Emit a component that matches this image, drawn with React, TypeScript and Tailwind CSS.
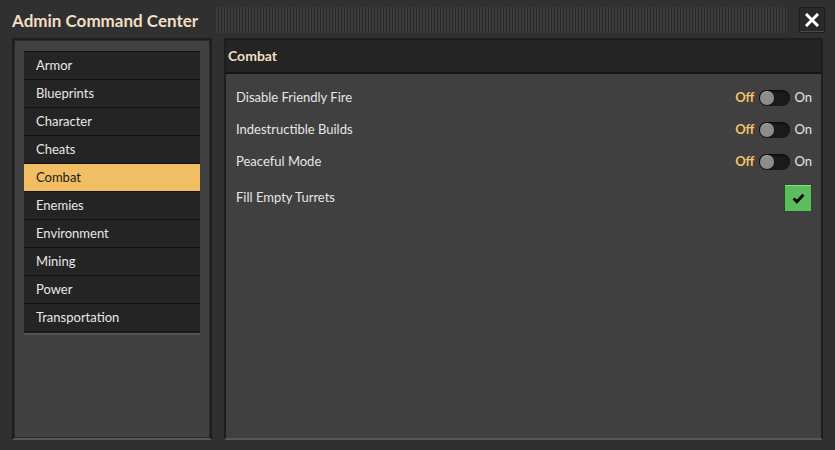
import React from "react";

const items = [
  "Armor",
  "Blueprints",
  "Character",
  "Cheats",
  "Combat",
  "Enemies",
  "Environment",
  "Mining",
  "Power",
  "Transportation",
];

function Toggle() {
  return (
    <div className="flex items-center gap-[4px]">
      <span className="text-[13px] font-bold text-[#f2c46a]">Off</span>
      <div className="relative ml-[1px] h-[16px] w-[31px] rounded-full bg-[#1c1b1c] shadow-[inset_0_1px_2px_rgba(0,0,0,0.8)]">
        <div className="absolute left-[1px] top-[1px] h-[14px] w-[14px] rounded-full bg-[#8c8c8c] shadow-[inset_0_1px_0_rgba(255,255,255,0.25)]" />
      </div>
      <span className="text-[13px] text-[#e6e6e6]">On</span>
    </div>
  );
}

export default function App() {
  return (
    <div
      className="flex h-[450px] w-[835px] flex-col bg-[#313031] text-[#e6e6e6]"
      style={{ fontFamily: "Lato, 'Noto Sans', sans-serif" }}
    >
      {/* title bar */}
      <div className="flex h-[38px] items-center pl-[12px] pr-[10px] pt-[2px]">
        <div className="text-[17px] font-bold leading-none text-[#f1dfc2]">Admin Command Center</div>
        <div className="ml-[18px] h-[26px] flex-1 bg-[repeating-linear-gradient(90deg,#3c3b3c_0px,#3c3b3c_2px,#2b2a2b_2px,#2b2a2b_3px)]" />
        <button className="ml-[12px] flex h-[26px] w-[26px] items-center justify-center border border-[#1e1d1e] bg-[#2a292a] shadow-[inset_0_-1px_0_#4a494a]">
          <svg width="14" height="14" viewBox="0 0 14 14">
            <path d="M2 2 L12 12 M12 2 L2 12" stroke="#ffffff" strokeWidth="3" strokeLinecap="square" />
          </svg>
        </button>
      </div>

      {/* body */}
      <div className="flex flex-1 gap-[12px] pb-[10px] pl-[12px] pr-[12px]">
        {/* left panel */}
        <div className="w-[200px] border-2 border-[#1f1e1f] border-b-[#575657] bg-[#414141] px-[10px] pt-[11px] shadow-[inset_0_0_0_1px_#2a292a]">
          <div className="flex flex-col bg-[#1a191a] pb-[2px] shadow-[0_2px_0_#555455]">
            {items.map((it) => {
              const sel = it === "Combat";
              return (
                <div
                  key={it}
                  className={
                    sel
                      ? "flex h-[28px] items-center border-t border-[#141314] bg-[#f2be64] pl-[12px] text-[13px] text-[#1b1a1b]"
                      : "flex h-[28px] items-center border-t border-[#141314] bg-[#252425] pl-[12px] text-[13px] text-[#e8e8e8]"
                  }
                >
                  {it}
                </div>
              );
            })}
          </div>
        </div>

        {/* right panel */}
        <div className="flex flex-1 flex-col border-2 border-[#1f1e1f] border-b-[#575657] bg-[#404040]">
          <div className="flex h-[34px] items-center border-b-2 border-[#141314] bg-[#252425] pb-[2px] pl-[2px] text-[14px] font-bold text-[#f1dfc2]">
            Combat
          </div>
          <div className="flex flex-col pl-[10px] pr-[9px] pt-[8px]">
            {["Disable Friendly Fire", "Indestructible Builds", "Peaceful Mode"].map((t) => (
              <div key={t} className="flex h-[32px] items-center justify-between">
                <span className="text-[13px]">{t}</span>
                <Toggle />
              </div>
            ))}
            <div className="flex h-[40px] items-center justify-between">
              <span className="text-[13px]">Fill Empty Turrets</span>
              <div className="flex h-[28px] w-[28px] items-center justify-center border border-[#2a4a2a] bg-[#5cbd5c] shadow-[inset_0_1px_0_#8ad88a]">
                <svg width="13" height="13" viewBox="0 0 12 12">
                  <path d="M1.5 6 L4.5 9 L10.5 2.5" stroke="#000" strokeWidth="2.6" fill="none" />
                </svg>
              </div>
            </div>
          </div>
        </div>
      </div>
    </div>
  );
}
